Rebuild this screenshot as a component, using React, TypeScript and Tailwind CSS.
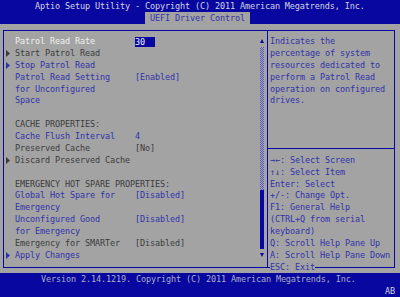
type Tone = 'blue' | 'dark' | 'white';

interface Item {
  label: string;
  tone: Tone;
  arrow?: boolean;
  value?: string;
  selected?: boolean;
}

const ROW = 'h-[11.875px] flex items-center whitespace-pre leading-none';

const toneClass: Record<Tone, string> = {
  blue: 'text-[#3232aa]',
  dark: 'text-[#3c3c3c]',
  white: 'text-[#f0f0f0]',
};

const items: (Item | null)[] = [
  { label: 'Patrol Read Rate', tone: 'white', value: '30', selected: true },
  { label: 'Start Patrol Read', tone: 'dark', arrow: true },
  { label: 'Stop Patrol Read', tone: 'blue', arrow: true },
  { label: 'Patrol Read Setting', tone: 'blue', value: '[Enabled]' },
  { label: 'for Unconfigured', tone: 'blue' },
  { label: 'Space', tone: 'blue' },
  null,
  { label: 'CACHE PROPERTIES:', tone: 'dark' },
  { label: 'Cache Flush Interval', tone: 'blue', value: '4' },
  { label: 'Preserved Cache', tone: 'dark', value: '[No]' },
  { label: 'Discard Preserved Cache', tone: 'dark', arrow: true },
  null,
  { label: 'EMERGENCY HOT SPARE PROPERTIES:', tone: 'dark' },
  { label: 'Global Hot Spare for', tone: 'blue', value: '[Disabled]' },
  { label: 'Emergency', tone: 'blue' },
  { label: 'Unconfigured Good', tone: 'blue', value: '[Disabled]' },
  { label: 'for Emergency', tone: 'blue' },
  { label: 'Emergency for SMARTer', tone: 'dark', value: '[Disabled]' },
  { label: 'Apply Changes', tone: 'blue', arrow: true },
];

// null = blank row, '-' = separator line
const help: (string | null)[] = [
  'Indicates the',
  'percentage of system',
  'resources dedicated to',
  'perform a Patrol Read',
  'operation on configured',
  'drives.',
  null,
  null,
  null,
  '-',
  '→←: Select Screen',
  '↑↓: Select Item',
  'Enter: Select',
  '+/-: Change Opt.',
  'F1: General Help',
  '(CTRL+Q from serial',
  'keyboard)',
  'Q: Scroll Help Pane Up',
  'A: Scroll Help Pane Down',
];

function Arrow({ tone }: { tone: Tone }) {
  return (
    <svg className={`w-[4px] h-[7px] ml-[2px] ${toneClass[tone]}`} viewBox="0 0 4 7">
      <polygon points="0,0 4,3.5 0,7" fill="currentColor" />
    </svg>
  );
}

function MenuRow({ item }: { item: Item | null }) {
  if (!item) return <div className={ROW} />;
  return (
    <div className={`${ROW} ${toneClass[item.tone]}`}>
      <div className="w-[11px] flex items-center">{item.arrow && <Arrow tone={item.tone} />}</div>
      <div className="w-[120px]">{item.label}</div>
      {item.value &&
        (item.selected ? (
          <div className="bg-[#0808a0] text-[#f0f0f0] w-[20px] h-[10px] mt-[2px] flex items-center">
            {item.value}
          </div>
        ) : (
          <div>{item.value}</div>
        ))}
    </div>
  );
}

function ScrollBar() {
  return (
    <div className="w-[4px] flex flex-col">
      <div className="h-[11.875px] flex items-center justify-center">
        <svg className="w-[4px] h-[4px] text-[#0808a0]" viewBox="0 0 4 4">
          <polygon points="2,0 4,4 0,4" fill="currentColor" />
        </svg>
      </div>
      <div className="h-[142.5px] bg-[image:repeating-conic-gradient(#5a5ab4_0_25%,#a6a6b8_0_50%)] bg-[length:2px_2px]" />
      <div className="h-[59.375px] bg-[#0808a0]" />
      <div className="h-[11.875px] flex items-center justify-center">
        <svg className="w-[4px] h-[4px] text-[#0808a0]" viewBox="0 0 4 4">
          <polygon points="0,0 4,0 2,4" fill="currentColor" />
        </svg>
      </div>
    </div>
  );
}

export default function App() {
  return (
    <div className="w-[400px] h-[297px] bg-[#a3a3a3] flex flex-col overflow-hidden font-['DejaVu_Sans_Mono',monospace] text-[8.5px] tracking-[-0.12px]">
      <div className="bg-[#0808a0]">
        <div className={`${ROW} pl-[35px] text-[#d4d4e0]`}>
          Aptio Setup Utility - Copyright (C) 2011 American Megatrends, Inc.
        </div>
        <div className={`${ROW} pl-[145px]`}>
          <div className="h-full w-[105px] bg-[#a3a3a3] text-[#3232aa] flex items-center pl-[5px]">
            UEFI Driver Control
          </div>
        </div>
      </div>

      <div className="flex-1 pt-[6px]">
        <div className="relative ml-[3px] w-[392px] border border-[#0808a0] flex">
          <div className="w-[263px] pr-[3px] pt-[4.625px] pb-[5.75px] flex">
            <div className="flex-1">
              {items.map((item, i) => (
                <MenuRow key={i} item={item} />
              ))}
            </div>
            <ScrollBar />
          </div>
          <div className="flex-1 border-l border-[#0808a0] pt-[4.625px] pb-[5.75px] text-[#3232aa]">
            {help.map((line, i) =>
              line === '-' ? (
                <div key={i} className="h-[11.875px] flex items-center">
                  <div className="w-full h-px bg-[#0808a0]" />
                </div>
              ) : (
                <div key={i} className={`${ROW} pl-[2px]`}>
                  {line}
                </div>
              ),
            )}
          </div>
          <div className="absolute left-[266px] -bottom-[6px] h-[11px] bg-[#a3a3a3] text-[#3232aa] flex items-center whitespace-pre leading-none">
            ESC: Exit
          </div>
        </div>
      </div>

      <div className="h-[24px] bg-[#0808a0] text-[#acacc4]">
        <div className={`${ROW} pl-[41px]`}>
          Version 2.14.1219. Copyright (C) 2011 American Megatrends, Inc.
        </div>
        <div className={`${ROW} pl-[385px] text-[#d4d4e0]`}>AB</div>
      </div>
    </div>
  );
}
